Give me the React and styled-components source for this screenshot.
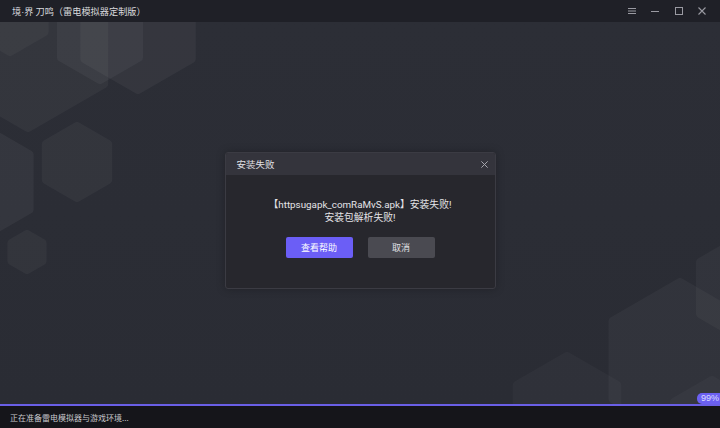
import styled, { createGlobalStyle } from 'styled-components';

const GlobalStyle = createGlobalStyle`
  html, body {
    margin: 0;
    padding: 0;
    background: #2b2d35;
  }
  body {
    font-family: 'Noto Sans CJK SC', 'Noto Sans', sans-serif;
  }
`;

// page coordinates; the stage starts 22px down, below the title bar
const STAGE_TOP = 22;

const hexPoints = (cx, cy, r) =>
  Array.from({ length: 6 }, (_, i) => {
    const a = (Math.PI / 3) * i - Math.PI / 2;
    return `${(cx + r * Math.cos(a)).toFixed(1)},${(cy - STAGE_TOP + r * Math.sin(a)).toFixed(1)}`;
  }).join(' ');

const hexes = [
  { cx: 28, cy: 40, r: 88, o: 0.035 },
  { cx: 100, cy: 35, r: 45, o: 0.04 },
  { cx: 138, cy: 28, r: 62, o: 0.04 },
  { cx: 10, cy: 12, r: 40, o: 0.03 },
  { cx: 77, cy: 162, r: 36, o: 0.035 },
  { cx: -18, cy: 182, r: 55, o: 0.045 },
  { cx: 27, cy: 252, r: 18, o: 0.035 },
  { cx: 745, cy: 288, r: 52, o: 0.03 },
  { cx: 680, cy: 360, r: 78, o: 0.03 },
  { cx: 567, cy: 414, r: 58, o: 0.025 },
  { cx: 712, cy: 424, r: 44, o: 0.025 },
];

const Backdrop = () => (
  <HexLayer viewBox="0 0 720 382" preserveAspectRatio="none">
    {hexes.map((h, i) => (
      <g key={i} opacity={h.o}>
        <polygon
          points={hexPoints(h.cx, h.cy, h.r)}
          fill="#ffffff"
          stroke="#ffffff"
          strokeWidth="8"
          strokeLinejoin="round"
        />
      </g>
    ))}
  </HexLayer>
);

const MenuIcon = () => (
  <svg width="10" height="10" viewBox="0 0 10 10" fill="none" stroke="currentColor" strokeWidth="1">
    <path d="M1 2.5h8M1 5h8M1 7.5h8" />
  </svg>
);

const MinIcon = () => (
  <svg width="10" height="10" viewBox="0 0 10 10" fill="none" stroke="currentColor" strokeWidth="1">
    <path d="M1 5.5h8" />
  </svg>
);

const MaxIcon = () => (
  <svg width="10" height="10" viewBox="0 0 10 10" fill="none" stroke="currentColor" strokeWidth="1">
    <rect x="1.5" y="1.5" width="7" height="7" />
  </svg>
);

const CloseIcon = ({ size = 10 }) => (
  <svg width={size} height={size} viewBox="0 0 10 10" fill="none" stroke="currentColor" strokeWidth="1.1">
    <path d="M1.5 1.5l7 7M8.5 1.5l-7 7" />
  </svg>
);

const App = () => {
  return (
    <>
      <GlobalStyle />
      <Window>
        <TitleBar>
          <Title>
            境<Dot>·</Dot>界 刀鸣（雷电模拟器定制版）
          </Title>
          <Controls>
            <CtrlButton><MenuIcon /></CtrlButton>
            <CtrlButton><MinIcon /></CtrlButton>
            <CtrlButton><MaxIcon /></CtrlButton>
            <CtrlButton><CloseIcon /></CtrlButton>
          </Controls>
        </TitleBar>
        <Stage>
          <Backdrop />
          <Dialog>
            <DialogHeader>
              <span>安装失败</span>
              <DialogClose><CloseIcon size={9} /></DialogClose>
            </DialogHeader>
            <DialogBody>
              <Message>
                【httpsugapk_comRaMvS.apk】安装失败!
                <br />
                安装包解析失败!
              </Message>
              <Actions>
                <Button $primary>查看帮助</Button>
                <Button>取消</Button>
              </Actions>
            </DialogBody>
          </Dialog>
        </Stage>
        <StatusBar>
          <Badge>99%</Badge>
          <StatusText>正在准备雷电模拟器与游戏环境...</StatusText>
        </StatusBar>
      </Window>
    </>
  );
};

const Window = styled.div`
  width: 720px;
  height: 428px;
  display: flex;
  flex-direction: column;
  background: #2b2d35;
  overflow: hidden;
`;

const TitleBar = styled.div`
  height: 22px;
  flex: none;
  display: flex;
  align-items: center;
  justify-content: space-between;
  padding: 0 6px 0 12px;
  background: #1f2027;
`;

const Title = styled.div`
  color: #d8d8dc;
  font-size: 9.2px;
`;

const Dot = styled.span`
  font-family: 'Liberation Sans', sans-serif;
`;

const Controls = styled.div`
  display: flex;
  align-items: center;
`;

const CtrlButton = styled.div`
  width: 23.5px;
  height: 22px;
  display: flex;
  align-items: center;
  justify-content: center;
  color: #9a9aa2;
`;

const Stage = styled.div`
  position: relative;
  flex: 1;
  display: flex;
  align-items: center;
  justify-content: center;
  padding-top: 15px;
  background: linear-gradient(180deg, #2c2e36 0%, #2a2c34 100%);
`;

const HexLayer = styled.svg`
  position: absolute;
  inset: 0;
  width: 100%;
  height: 100%;
`;

const Dialog = styled.div`
  position: relative;
  width: 269px;
  border: 1px solid #3b3b43;
  border-radius: 3px;
  background: #27272d;
  box-shadow: 0 0 8px rgba(0, 0, 0, 0.25);
  overflow: hidden;
`;

const DialogHeader = styled.div`
  height: 22px;
  display: flex;
  align-items: center;
  justify-content: space-between;
  padding: 0 6px 0 11px;
  background: #34343c;
  color: #e2e2e6;
  font-size: 9.5px;
`;

const DialogClose = styled.div`
  display: flex;
  color: #a8a8b0;
`;

const DialogBody = styled.div`
  display: flex;
  flex-direction: column;
  align-items: center;
  padding: 23px 0 30px;
`;

const Message = styled.div`
  color: #e4e4e8;
  font-family: Roboto, 'Noto Sans CJK SC', sans-serif;
  font-size: 9.8px;
  line-height: 13px;
  text-align: center;
`;

const Actions = styled.div`
  display: flex;
  gap: 15px;
  margin-top: 13px;
`;

const Button = styled.div`
  width: 67px;
  height: 21px;
  display: flex;
  align-items: center;
  justify-content: center;
  border-radius: 2px;
  font-size: 9px;
  color: ${(p) => (p.$primary ? '#ffffff' : '#e0e0e4')};
  background: ${(p) => (p.$primary ? '#6b5ef6' : '#4a4a51')};
`;

const StatusBar = styled.div`
  position: relative;
  height: 22px;
  flex: none;
  display: flex;
  align-items: center;
  padding-left: 10px;
  background: #15151a;
  border-top: 2px solid #6a5fe6;
`;

const Badge = styled.div`
  position: absolute;
  right: -3px;
  top: -13px;
  height: 11px;
  padding: 0 4px;
  border-radius: 5px 0 0 5px;
  background: #6b60f2;
  color: #dcdcff;
  font-family: 'Liberation Sans', sans-serif;
  font-size: 9px;
  line-height: 11px;
`;

const StatusText = styled.div`
  color: #c8c8cc;
  font-size: 8px;
`;

export default App;
